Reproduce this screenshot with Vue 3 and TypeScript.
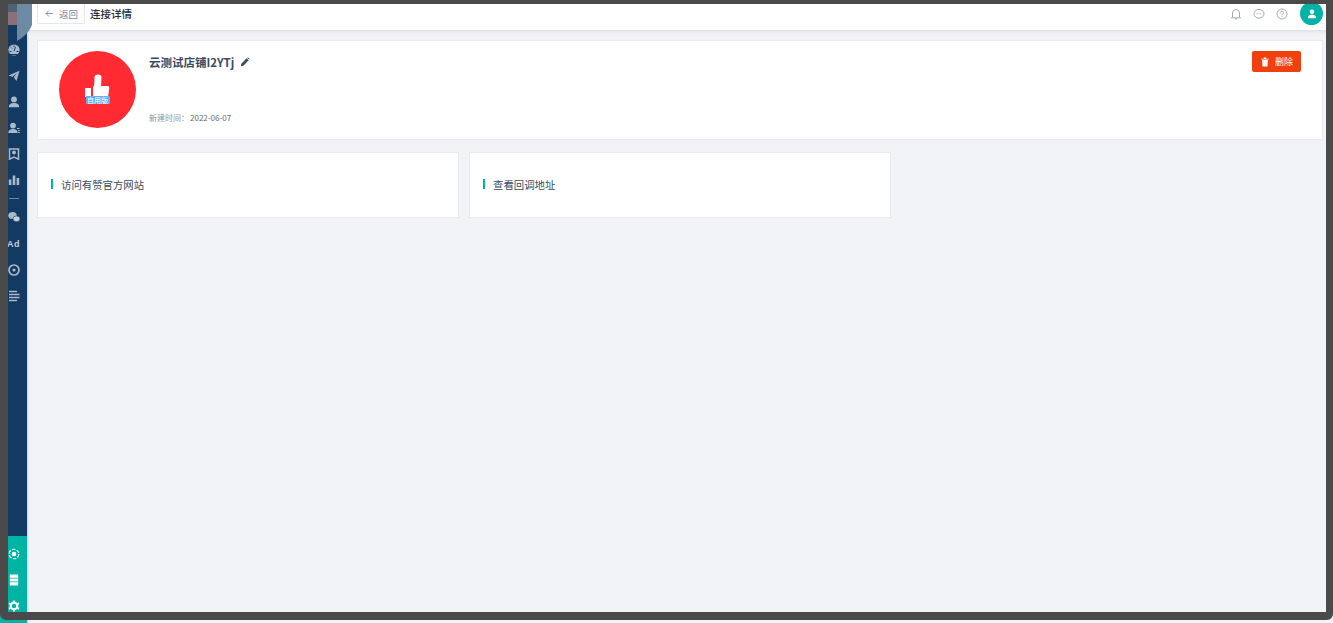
<script setup lang="ts">
const cards: string[] = ['访问有赞官方网站', '查看回调地址']
</script>

<template>
  <div class="screen">
    <aside class="sidebar">
      <svg class="logo" viewBox="0 0 24 38" width="24" height="38">
        <path d="M0 0H9V8H0z" fill="#4f6274"/>
        <path d="M0 8H9V21H0z" fill="#8a7078"/>
        <path d="M9 0H24V21Q20 31 9 37z" fill="#6d8aa5"/>
      </svg>
      <div class="nav">
        <svg class="ni" viewBox="0 0 12 12"><circle cx="6" cy="6" r="5.600" fill="#a9b9ca"/><path d="M6 7 7.500 3M1.500 7.500h2M8.500 7.500h2M3 3.500l1 1M6 1.500v1.500M2 10.500h8" stroke="#123a63" stroke-width="1"/></svg>
        <svg class="ni" viewBox="0 0 12 12"><path d="M.5 5.500 11.500.8 8.500 11 5.800 7.200 9 3 4.500 6.700z" fill="#a9b9ca"/></svg>
        <svg class="ni" viewBox="0 0 12 12"><circle cx="6" cy="3.400" r="2.900" fill="#a9b9ca"/><path d="M.8 11.200c0-3.200 2.200-4.200 5.200-4.200s5.200 1 5.200 4.200z" fill="#a9b9ca"/></svg>
        <svg class="ni" viewBox="0 0 12 12"><circle cx="5" cy="3.600" r="2.900" fill="#a9b9ca"/><path d="M.3 11c0-3 1.900-4 4.700-4s4.700 1 4.700 4z" fill="#a9b9ca"/><path d="M9 6.500h2.500M10 8.500h1.800M10 10.500h1.800" stroke="#a9b9ca"/></svg>
        <svg class="ni" viewBox="0 0 12 12"><path d="M1.500 1h9v10.200L6 9 1.500 11.200z" fill="none" stroke="#a9b9ca" stroke-width="1.500"/><circle cx="6" cy="4.500" r="1.900" fill="#a9b9ca"/></svg>
        <svg class="ni" viewBox="0 0 12 12"><path d="M.8 5.500h2.600V11H.8zM4.700 1.500h2.600V11H4.700zM8.600 4h2.600v7H8.600z" fill="#a9b9ca"/></svg>
        <div class="rule"></div>
        <svg class="ni" viewBox="0 0 12 12"><ellipse cx="4.500" cy="4.500" rx="4.200" ry="3.500" fill="#a9b9ca"/><ellipse cx="8.500" cy="7.800" rx="3.500" ry="2.900" fill="#c3cfdb" stroke="#123a63" stroke-width=".6"/></svg>
        <span class="ad">Ad</span>
        <svg class="ni" viewBox="0 0 12 12"><circle cx="6" cy="6" r="5" fill="none" stroke="#a9b9ca" stroke-width="1.700"/><circle cx="6" cy="6" r="1.600" fill="#a9b9ca"/></svg>
        <svg class="ni" viewBox="0 0 12 12"><path d="M1 1.500h8M1 4.500h10.500M1 7.500h10.500M1 10.500h8" stroke="#a9b9ca" stroke-width="1.500"/></svg>
      </div>
      <div class="tools">
        <svg class="ti" viewBox="0 0 12 12"><circle cx="6" cy="6" r="4.800" fill="none" stroke="#fff" stroke-width="1.100" stroke-dasharray="3.500 1.500"/><circle cx="6" cy="6" r="2.300" fill="#fff"/></svg>
        <svg class="ti" viewBox="0 0 12 12"><path d="M1.800.5h8.400v3.200H1.800zM1.800 4.400h8.400v3.200H1.800zM1.800 8.300h8.400v3.200H1.800z" fill="#fff"/></svg>
        <svg class="ti" viewBox="0 0 12 12"><circle cx="6" cy="6" r="3.300" fill="none" stroke="#fff" stroke-width="2.200"/><path d="M6 .6v2M6 9.400v2M.9 3.100l1.700 1M9.400 7.900l1.700 1M.9 8.900l1.700-1M9.400 4.100l1.700-1" stroke="#fff" stroke-width="1.800"/></svg>
      </div>
    </aside>

    <div class="page">
      <header class="head">
        <button class="back">
          <svg viewBox="0 0 9 9" width="9" height="9"><path d="M8 4.500H1M4 1.500l-3 3 3 3" fill="none" stroke="#6b7888" stroke-width=".8"/></svg>
          <span>返回</span>
        </button>
        <h1>连接详情</h1>
        <div class="actions">
          <svg class="hi" viewBox="0 0 12 12"><path d="M2.500 9V5a3.500 3.500 0 0 1 7 0v4l1 .8h-9zM5 10.800h2" fill="none" stroke="#8a97a8" stroke-width=".8"/></svg>
          <svg class="hi" viewBox="0 0 12 12"><ellipse cx="6" cy="5.800" rx="5" ry="4.400" fill="none" stroke="#8a97a8" stroke-width=".8"/><path d="M3.800 5.800h.8M5.600 5.800h.8M7.400 5.800h.8" stroke="#8a97a8"/></svg>
          <svg class="hi" viewBox="0 0 12 12"><circle cx="6" cy="6" r="5" fill="none" stroke="#8a97a8" stroke-width=".8"/><path d="M4.500 4.800a1.500 1.500 0 1 1 2.200 1.300C6.100 6.500 6 6.800 6 7.400M6 8.300v.9" fill="none" stroke="#8a97a8" stroke-width=".8"/></svg>
          <div class="avatar">
            <svg viewBox="0 0 12 12" width="10" height="10"><circle cx="6" cy="3.400" r="2.800" fill="#fff"/><path d="M1 11c0-3 2-4 5-4s5 1 5 4z" fill="#fff"/></svg>
          </div>
        </div>
      </header>

      <main class="main">
        <section class="card hero">
          <div class="circle">
            <svg class="thumb" viewBox="0 0 25 23" width="25" height="23">
              <path d="M8 13c1.500-1 1.500-5 1.500-10C9.500 0 16 -.5 16.500 3L16 12h6c2 0 2.500 1 2.200 2.500L23 23H8z" fill="#fff"/>
              <path d="M0 14h6v9H0z" fill="#fff"/>
            </svg>
            <span class="tag">自用版</span>
          </div>
          <div class="info">
            <div class="name">云测试店铺I2YTj
              <svg viewBox="0 0 12 12" width="10" height="10"><path d="M1 11l.6-3L8 1.600 10.400 4 4 10.400zM8.800.9l.7-.5 2.100 2.100-.5.700z" fill="#3a4b5f"/></svg>
            </div>
            <div class="date"><span class="lbl">新建时间：</span><span>2022-06-07</span></div>
          </div>
          <button class="del">
            <svg viewBox="0 0 12 12" width="10" height="10"><path d="M2.500 3.500h7L9 11.500H3zM1.500 2h9v1h-9zM4.500 .7h3V2h-3z" fill="#fff"/></svg>
            删除
          </button>
        </section>

        <div class="grid">
          <section v-for="c in cards" :key="c" class="card link"><i class="bar"></i>{{ c }}</section>
        </div>
      </main>
    </div>

    <div class="frame"></div>
  </div>
</template>

<style>
html, body { margin: 0; overflow: hidden; background: #fff; }
</style>

<style scoped>
.screen {
  position: relative;
  display: flex;
  width: 1333px;
  height: 623px;
  overflow: hidden;
  font-family: "Noto Sans CJK SC", "Noto Sans", sans-serif;
  color: #3a4b5f;
}
.sidebar {
  position: relative;
  z-index: 2;
  width: 27px;
  flex: none;
  display: flex;
  flex-direction: column;
  background: #123a63;
  box-shadow: 1px 0 2px rgba(120, 135, 160, .3);
}
.logo {
  display: block;
  flex: none;
  margin: 4px 0 0 8px;
  overflow: visible;
}
.nav {
  display: flex;
  flex-direction: column;
  align-items: center;
  margin-top: 2px;
  flex: 1;
}
.ni {
  width: 12px;
  height: 12px;
  margin-bottom: 14px;
  flex: none;
}
.rule {
  width: 10px;
  height: 1px;
  background: #6f87a0;
  margin: -2px 0 12px;
}
.ad {
  font: 700 9px/12px "Liberation Sans", sans-serif;
  color: #c3cfdb;
  margin: 1px 0 14px;
  letter-spacing: .5px;
}
.tools {
  height: 87px;
  background: #00b3a4;
  padding: 12px 0 0;
  box-sizing: border-box;
  display: flex;
  flex-direction: column;
  align-items: center;
  gap: 14px;
}
.ti { width: 12px; height: 12px; flex: none; }
.page {
  flex: 1;
  min-width: 0;
  display: flex;
  flex-direction: column;
  background: #f1f3f7;
}
.head {
  height: 26px;
  margin-top: 4px;
  background: #fff;
  box-shadow: 0 1px 3px rgba(120, 135, 160, .25);
  display: flex;
  align-items: flex-start;
  padding-left: 10px;
  position: relative;
}
.back {
  width: 48px;
  height: 20px;
  box-sizing: border-box;
  border: 1px solid #e3e7ee;
  border-top: 0;
  border-radius: 0 0 2px 2px;
  background: #fff;
  color: #7b8794;
  font: 9.500px/20px "Noto Sans CJK SC", sans-serif;
  padding: 0 0 0 7px;
  display: flex;
  align-items: center;
  gap: 5px;
}
h1 {
  margin: 0 0 0 5px;
  font-size: 10.500px;
  line-height: 20px;
  font-weight: 500;
  color: #1f2d3d;
}
.actions {
  margin-left: auto;
  margin-right: 10px;
  display: flex;
  align-items: center;
  gap: 11px;
}
.hi { width: 12px; height: 12px; margin-bottom: 2px; }
.avatar {
  width: 23px;
  height: 23px;
  border-radius: 50%;
  background: #00b3a4;
  display: flex;
  align-items: center;
  justify-content: center;
  margin-left: 1px;
  margin-top: -2px;
}
.main {
  flex: 1;
  padding: 11px 11px 0;
}
.card {
  background: #fff;
  box-shadow: 0 0 0 1px #e9ebf0;
  box-sizing: border-box;
}
.hero {
  height: 98px;
  display: flex;
  padding: 10px 21px;
}
.circle {
  width: 77px;
  height: 77px;
  border-radius: 50%;
  background: #ff2a32;
  display: flex;
  flex-direction: column;
  align-items: center;
  padding-top: 23px;
  box-sizing: border-box;
  flex: none;
}
.thumb { flex: none; }
.tag {
  margin-top: -1px;
  background: #63aef5;
  color: #fff;
  font-size: 7px;
  line-height: 8px;
  height: 8px;
  border-radius: 1px;
  width: 24px;
  text-align: center;
  white-space: nowrap;
  flex: none;
}
.info {
  margin-left: 13px;
  display: flex;
  flex-direction: column;
  flex: 1;
}
.name {
  font-size: 11.500px;
  line-height: 20px;
  font-weight: 700;
  color: #3a4b5f;
  display: flex;
  align-items: center;
  gap: 6px;
  margin-top: 1px;
}
.date {
  margin-top: auto;
  font-size: 8px;
  line-height: 12px;
  color: #666c73;
  margin-bottom: 5px;
}
.lbl { color: #8f959c; margin-right: 1px; }
.del {
  width: 49px;
  height: 21px;
  border: 0;
  border-radius: 2px;
  background: #f0400f;
  color: #fff;
  font: 9px/21px "Noto Sans CJK SC", sans-serif;
  display: flex;
  align-items: center;
  justify-content: center;
  gap: 5px;
  padding: 0;
  flex: none;
}
.grid {
  margin-top: 14px;
  display: grid;
  grid-template-columns: 420px 420px;
  gap: 12px;
}
.link {
  height: 64px;
  display: flex;
  align-items: center;
  padding: 0 0 2px 13px;
  font-size: 10.400px;
  color: #3a4b5f;
}
.bar {
  width: 2px;
  height: 10px;
  background: #00b3a4;
  margin-right: 8px;
}
.frame {
  position: absolute;
  left: 0;
  top: 0;
  width: 1333px;
  height: 620px;
  box-sizing: border-box;
  border: solid #4a4a4a;
  border-width: 4px 7px 8px 8px;
  border-radius: 0 0 6px 6px;
  pointer-events: none;
  z-index: 5;
}
</style>
